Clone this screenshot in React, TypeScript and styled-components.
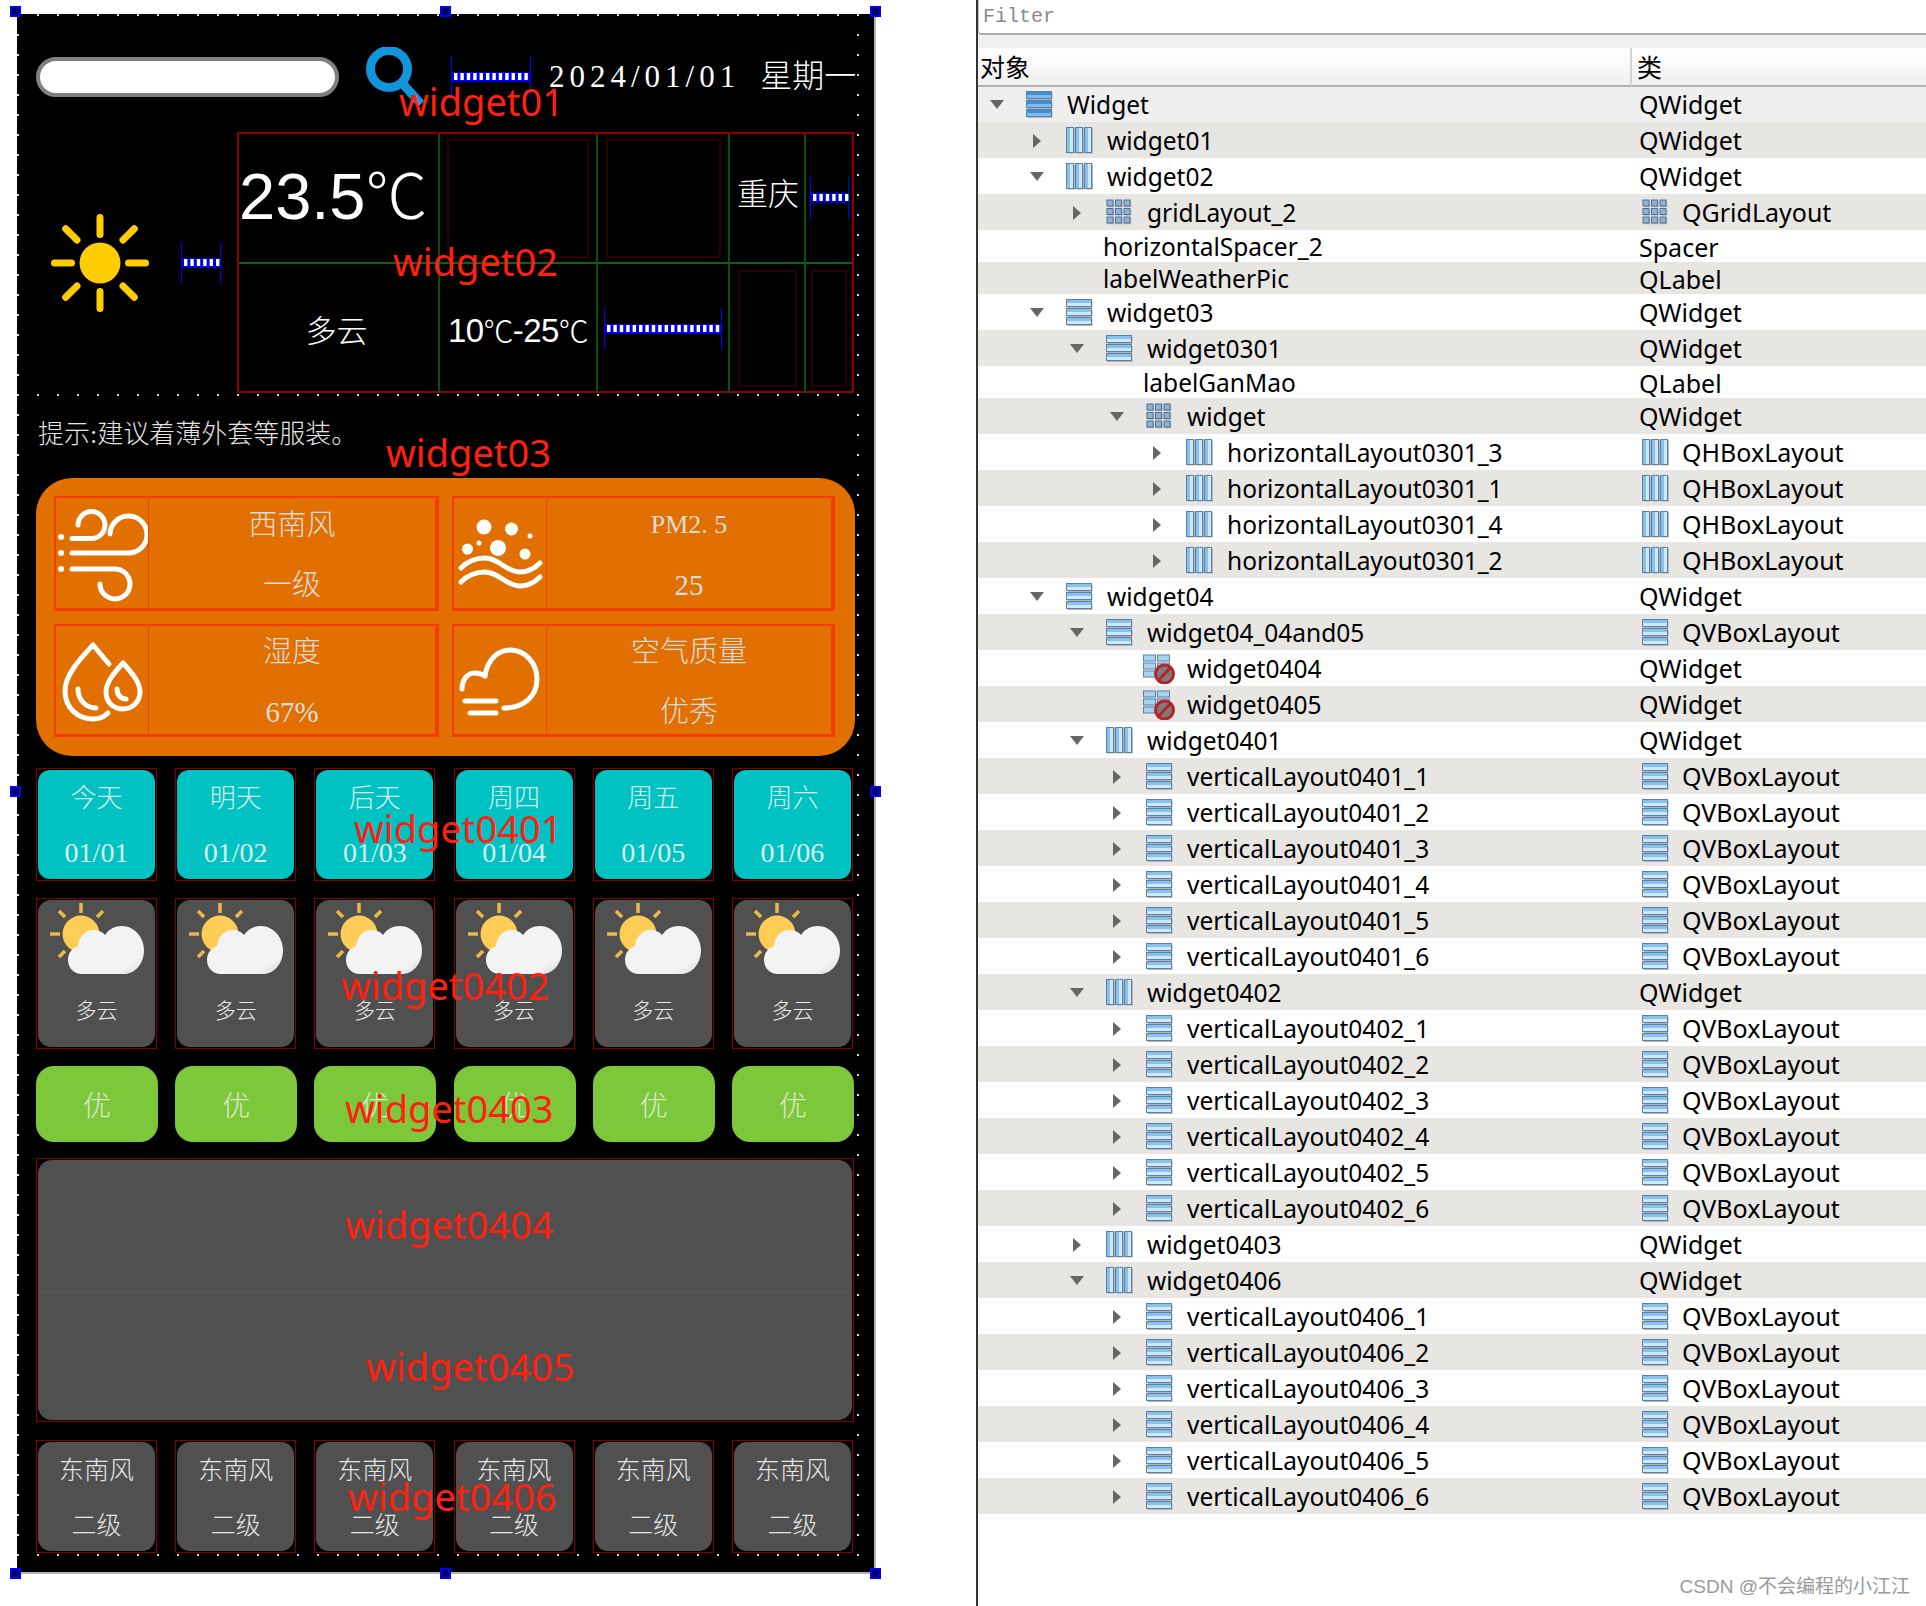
import React from "react";
import styled, { createGlobalStyle } from "styled-components";

const GlobalStyle = createGlobalStyle`
  html, body {
    margin: 0;
    background: #fff;
  }
  * {
    box-sizing: border-box;
  }
`;

const SERIF = `"Liberation Serif", "Noto Sans CJK SC", serif`;
const SANS = `"Noto Sans", "Noto Sans CJK SC", sans-serif`;

const days = [
  ["今天", "01/01"],
  ["明天", "01/02"],
  ["后天", "01/03"],
  ["周四", "01/04"],
  ["周五", "01/05"],
  ["周六", "01/06"],
];

type IconKind = "v" | "vDark" | "h" | "grid" | "broken" | null;
type TreeItem = {
  level: number;
  name: string;
  cls: string;
  icon: IconKind;
  arrow?: "d" | "r";
  clsIcon?: IconKind;
};

const layouts = (id: string): TreeItem[] =>
  [1, 2, 3, 4, 5, 6].map((n) => ({
    level: 3,
    name: `verticalLayout${id}_${n}`,
    cls: "QVBoxLayout",
    icon: "v",
    arrow: "r",
    clsIcon: "v",
  }));

const tree: TreeItem[] = [
  { level: 0, name: "Widget", cls: "QWidget", icon: "vDark", arrow: "d" },
  { level: 1, name: "widget01", cls: "QWidget", icon: "h", arrow: "r" },
  { level: 1, name: "widget02", cls: "QWidget", icon: "h", arrow: "d" },
  { level: 2, name: "gridLayout_2", cls: "QGridLayout", icon: "grid", arrow: "r", clsIcon: "grid" },
  { level: 2, name: "horizontalSpacer_2", cls: "Spacer", icon: null },
  { level: 2, name: "labelWeatherPic", cls: "QLabel", icon: null },
  { level: 1, name: "widget03", cls: "QWidget", icon: "v", arrow: "d" },
  { level: 2, name: "widget0301", cls: "QWidget", icon: "v", arrow: "d" },
  { level: 3, name: "labelGanMao", cls: "QLabel", icon: null },
  { level: 3, name: "widget", cls: "QWidget", icon: "grid", arrow: "d" },
  ...["3", "1", "4", "2"].map(
    (n): TreeItem => ({
      level: 4,
      name: `horizontalLayout0301_${n}`,
      cls: "QHBoxLayout",
      icon: "h",
      arrow: "r",
      clsIcon: "h",
    })
  ),
  { level: 1, name: "widget04", cls: "QWidget", icon: "v", arrow: "d" },
  { level: 2, name: "widget04_04and05", cls: "QVBoxLayout", icon: "v", arrow: "d", clsIcon: "v" },
  { level: 3, name: "widget0404", cls: "QWidget", icon: "broken" },
  { level: 3, name: "widget0405", cls: "QWidget", icon: "broken" },
  { level: 2, name: "widget0401", cls: "QWidget", icon: "h", arrow: "d" },
  ...layouts("0401"),
  { level: 2, name: "widget0402", cls: "QWidget", icon: "h", arrow: "d" },
  ...layouts("0402"),
  { level: 2, name: "widget0403", cls: "QWidget", icon: "h", arrow: "r" },
  { level: 2, name: "widget0406", cls: "QWidget", icon: "h", arrow: "d" },
  ...layouts("0406"),
];

const Spring = ({ width, height }: { width: number; height: number }) => {
  const mid = height / 2;
  const bars = [];
  for (let x = 3; x < width - 3; x += 6.4) bars.push(x);
  return (
    <svg width={width} height={height} style={{ display: "block", flex: "none" }}>
      <path d={`M0.5 0V${height}M${width - 0.5} 0V${height}`} stroke="#0000ff" strokeWidth="1" />
      <rect x="0" y={mid - 5} width={width} height="10" fill="#0000e0" />
      {bars.map((x) => (
        <rect key={x} x={x} y={mid - 4} width="3.4" height="7" fill="#fff" />
      ))}
    </svg>
  );
};

const SearchIcon = () => (
  <svg width="60" height="60" viewBox="0 0 60 60" style={{ display: "block", flex: "none" }}>
    <circle cx="23" cy="22" r="18.5" fill="none" stroke="#1296db" strokeWidth="9" />
    <path d="M36 36L55 57" stroke="#1296db" strokeWidth="9" />
  </svg>
);

const BigSun = () => (
  <svg width="128" height="110" viewBox="-64 -55 128 110" style={{ display: "block", flex: "none" }}>
    <circle r="20.5" fill="#ffcc00" />
    {[0, 90, 180, 270].map((a) => (
      <rect key={a} x="-3.5" y="-49" width="7" height="24" rx="3.5" fill="#ffcc00" transform={`rotate(${a})`} />
    ))}
    {[45, 135, 225, 315].map((a) => (
      <rect key={a} x="-3.5" y="-52" width="7" height="23" rx="3.5" fill="#ffcc00" transform={`rotate(${a})`} />
    ))}
  </svg>
);

const CloudSun = () => (
  <svg width="117" height="80" viewBox="0 0 117 80" style={{ display: "block" }}>
    <defs>
      <linearGradient id="cloudFill" x1="0.2" y1="0.2" x2="1" y2="1">
        <stop offset="0.75" stopColor="#f3f3f3" />
        <stop offset="1" stopColor="#d6d6d6" />
      </linearGradient>
    </defs>
    <circle cx="43" cy="34" r="18.5" fill="#ffcc55" />
    <g stroke="#eab94e" strokeWidth="3.5">
      <path d="M43 3V13" />
      <path d="M12 34H22" />
      <path d="M21 11L27 17" />
      <path d="M65 11L59 17" />
      <path d="M21 57L27 51" />
    </g>
    <path
      d="M44 74C36 74 30 68 30 60C30 53 34 48 40 46C41 36 48 30 55 30C60 30 65 32 67 35C71 29 77 26 84 26C96 26 106 37 106 50C106 64 97 74 86 74Z"
      fill="url(#cloudFill)"
    />
  </svg>
);

const GlyphSvg = styled.svg`
  display: block;
  width: 92px;
  height: 110px;
  flex: none;
  fill: none;
  stroke: #fff;
  stroke-width: 5;
  stroke-linecap: round;
  stroke-linejoin: round;
`;

const WindGlyph = () => (
  <GlyphSvg viewBox="0 0 92 110">
    <path d="M22 27A13.5 13.5 0 1 1 35.5 40.5H16" />
    <path d="M54 36A18.5 18.5 0 1 1 72 55H16" />
    <path d="M16 71H59A15 15 0 1 1 44 86" />
    <g fill="#fff" stroke="none">
      <circle cx="5" cy="39" r="3" />
      <circle cx="5" cy="55" r="3" />
      <circle cx="5" cy="71" r="3" />
    </g>
  </GlyphSvg>
);

const DustGlyph = () => (
  <GlyphSvg viewBox="0 0 92 110">
    <g fill="#fff" stroke="none">
      <circle cx="30" cy="29" r="7.5" />
      <circle cx="57.5" cy="31" r="6.5" />
      <circle cx="76" cy="38" r="2.5" />
      <circle cx="25" cy="45" r="2.5" />
      <circle cx="13.5" cy="51" r="5.5" />
      <circle cx="44" cy="50" r="8" />
      <circle cx="71" cy="56" r="5.5" />
    </g>
    <path d="M7 70C15 62 24 60 31 60C45 60 52 74 66 74C74 74 80 71 86 65" />
    <path d="M7 84C15 76 24 74 31 74C45 74 52 88 66 88C74 88 80 85 86 79" />
  </GlyphSvg>
);

const DropGlyph = () => (
  <GlyphSvg viewBox="0 0 92 110">
    <path d="M53 39L37 20C24 34 9 50 9 66C9 83 22 94 37 94C43 94 48 92 52 88" />
    <path d="M22 64C22 75 30 83 40 83" />
    <path d="M67 38C58 48 50 57 50 67C50 77 57 84 67 84C76 84 84 77 84 67C84 57 76 48 67 38Z" />
    <path d="M61 64C61 70 65 74 70 74" />
  </GlyphSvg>
);

const CloudGlyph = () => (
  <GlyphSvg viewBox="0 0 92 110">
    <path d="M31 51C33 35 44 25 56 25C71 25 83 38 83 54C83 71 70 83 50 83" />
    <path d="M8 64C8 54 14 48 21 48C25 48 28 49 31 51" />
    <path d="M11 76H42M16 88H42" />
  </GlyphSvg>
);

const TreeIcon = ({ kind }: { kind: IconKind }) => {
  const dark = kind === "vDark";
  const line = "#5f7fa3";
  const top = dark ? "#3f8fd8" : "#86c2ee";
  const low = dark ? "#7cbcf0" : "#cfe8fb";
  if (kind === "v" || kind === "vDark") {
    return (
      <IconSvg viewBox="0 0 27 27">
        {[1, 10, 19].map((y) => (
          <g key={y}>
            <rect x="1.5" y={y + 1} width="25" height="7" fill="#b4b4b4" />
            <rect x="0.5" y={y - 0.5} width="25" height="7" fill={low} stroke={line} />
            <rect x="1" y={y} width="24" height="3" fill={top} />
          </g>
        ))}
      </IconSvg>
    );
  }
  if (kind === "h") {
    return (
      <IconSvg viewBox="0 0 27 27">
        {[1, 10, 19].map((x) => (
          <g key={x}>
            <rect x={x + 1} y="1.5" width="7" height="25" fill="#b4b4b4" />
            <rect x={x - 0.5} y="0.5" width="7" height="25" fill={low} stroke={line} />
            <rect x={x} y="1" width="3" height="24" fill={top} />
          </g>
        ))}
      </IconSvg>
    );
  }
  if (kind === "grid") {
    return (
      <IconSvg viewBox="0 0 27 27">
        {[1, 9.5, 18].map((y) =>
          [1, 9.5, 18].map((x) => (
            <g key={`${x}-${y}`}>
              <rect x={x + 0.8} y={y + 0.8} width="6.5" height="6.5" fill="#bdbdbd" />
              <rect x={x} y={y} width="6" height="6" fill="#8fb2d6" stroke="#4e6d92" strokeWidth="1" />
            </g>
          ))
        )}
      </IconSvg>
    );
  }
  if (kind === "broken") {
    return (
      <BrokenSvg viewBox="0 0 32 30">
        {[1, 9, 17].map((y) => (
          <g key={y}>
            <rect x="0.5" y={y} width="12" height="6" fill="#a8d4f4" stroke={line} />
            <rect x="14.5" y={y} width="12" height="6" fill="#a8d4f4" stroke={line} />
          </g>
        ))}
        <circle cx="21.5" cy="20" r="9" fill="#7c7c7c" stroke="#b8222a" strokeWidth="3" />
        <path d="M15 27L28 13" stroke="#b8222a" strokeWidth="3" />
      </BrokenSvg>
    );
  }
  return null;
};

const TreeArrow = ({ dir }: { dir: "d" | "r" }) => (
  <svg width="14" height="14" viewBox="0 0 14 14" style={{ display: "block" }}>
    {dir === "d" ? <path d="M0 2H14L7 11Z" fill="#666" /> : <path d="M3 0L11 7L3 14Z" fill="#666" />}
  </svg>
);

const labels: [string, number, number][] = [
  ["widget01", 399, 101],
  ["widget02", 393, 261],
  ["widget03", 386, 452],
  ["widget0401", 354, 828],
  ["widget0402", 341, 985],
  ["widget0403", 345, 1108],
  ["widget0404", 345, 1224],
  ["widget0405", 366, 1366],
  ["widget0406", 348, 1496],
];

const handles: [number, number][] = [
  [10, 6],
  [440, 6],
  [870, 6],
  [10, 786],
  [870, 786],
  [10, 1568],
  [440, 1568],
  [870, 1568],
];

const App = () => {
  return (
    <Page>
      <GlobalStyle />
      <DesignerArea>
        <Form>
          <TopBar>
            <SearchBox />
            <SearchSlot>
              <SearchIcon />
            </SearchSlot>
            <Spring width={80} height={42} />
            <DateText>
              2024/01/01<WeekDay>星期一</WeekDay>
            </DateText>
          </TopBar>

          <NowRow>
            <BigSun />
            <SpringSlot>
              <Spring width={40} height={42} />
            </SpringSlot>
            <NowGrid>
              <NowCell $right $bottom $align="flex-start">
                <Temp>
                  23.5<TempUnit>℃</TempUnit>
                </Temp>
              </NowCell>
              <NowCell $right $bottom>
                <DimBox $w={142} $h={119} />
              </NowCell>
              <NowCell $right $bottom>
                <DimBox $w={115} $h={119} />
              </NowCell>
              <NowCell $right $bottom>
                <City $lift={14} $shift={2}>重庆</City>
              </NowCell>
              <NowCell $bottom>
                <Spring width={39} height={42} />
              </NowCell>
              <NowCell $right>
                <City $lift={0} $shift={-4}>多云</City>
              </NowCell>
              <NowCell $right>
                <Range>
                  10<RangeUnit>℃</RangeUnit>-25<RangeUnit>℃</RangeUnit>
                </Range>
              </NowCell>
              <NowCell $right>
                <Spring width={118} height={42} />
              </NowCell>
              <NowCell $right>
                <DimBox $w={59} $h={117} />
              </NowCell>
              <NowCell>
                <DimBox $w={36} $h={117} />
              </NowCell>
            </NowGrid>
          </NowRow>

          <Hint>提示:建议着薄外套等服装。</Hint>

          <OrangePanel>
            <StatBox>
              <WindGlyph />
              <StatText>
                <span>西南风</span>
                <span>一级</span>
              </StatText>
            </StatBox>
            <StatBox>
              <DustGlyph />
              <StatText>
                <LatinLine>PM2. 5</LatinLine>
                <span>25</span>
              </StatText>
            </StatBox>
            <StatBox>
              <DropGlyph />
              <StatText>
                <span>湿度</span>
                <span>67%</span>
              </StatText>
            </StatBox>
            <StatBox>
              <CloudGlyph />
              <StatText>
                <span>空气质量</span>
                <span>优秀</span>
              </StatText>
            </StatBox>
          </OrangePanel>

          <SixRow $top={12} $height={113}>
            {days.map(([day, date]) => (
              <FrameCell key={date}>
                <DayCard>
                  <span>{day}</span>
                  <span>{date}</span>
                </DayCard>
              </FrameCell>
            ))}
          </SixRow>

          <SixRow $top={17} $height={151}>
            {days.map(([, date]) => (
              <FrameCell key={date}>
                <ForecastCard>
                  <CloudSun />
                  <ForecastText>多云</ForecastText>
                </ForecastCard>
              </FrameCell>
            ))}
          </SixRow>

          <SixRow $top={17} $height={76}>
            {days.map(([, date]) => (
              <QualityCard key={date}>优</QualityCard>
            ))}
          </SixRow>

          <ChartFrame>
            <ChartPanel />
          </ChartFrame>

          <SixRow $top={18} $height={113}>
            {days.map(([, date]) => (
              <FrameCell key={date}>
                <WindCard>
                  <span>东南风</span>
                  <span>二级</span>
                </WindCard>
              </FrameCell>
            ))}
          </SixRow>

          <DotLine $dir="v" $pos={840} />
          <DotLine $dir="v" $pos={0} />
          <DotLine $dir="h" $pos={0} />
          <DotLine $dir="h" $pos={380} />
          <DotLine $dir="h" $pos={1540} />

          {labels.map(([text, x, y]) => (
            <DesignLabel key={text} $x={x - 17} $y={y - 14}>
              {text}
            </DesignLabel>
          ))}
        </Form>
        {handles.map(([x, y]) => (
          <Handle key={`${x}-${y}`} $x={x} $y={y} />
        ))}
      </DesignerArea>

      <Inspector>
        <FilterField>Filter</FilterField>
        <HeaderRow>
          <HeaderCell>对象</HeaderCell>
          <HeaderCell $last>类</HeaderCell>
        </HeaderRow>
        {tree.map((item, i) => (
          <TreeRow key={item.name} $index={i} $short={!item.icon}>
            <NameCell $level={item.level} $bare={!item.icon}>
              {item.icon && (
                <ArrowSlot>{item.arrow && <TreeArrow dir={item.arrow} />}</ArrowSlot>
              )}
              {item.icon && (
                <IconSlot>
                  <TreeIcon kind={item.icon} />
                </IconSlot>
              )}
              {item.name}
            </NameCell>
            <ClassCell>
              {item.clsIcon && (
                <ClassIcon>
                  <TreeIcon kind={item.clsIcon} />
                </ClassIcon>
              )}
              {item.cls}
            </ClassCell>
          </TreeRow>
        ))}
        <Watermark>CSDN @不会编程的小江江</Watermark>
      </Inspector>
    </Page>
  );
};

export default App;

const Page = styled.div`
  position: relative;
  display: flex;
  width: 1926px;
  height: 1606px;
  overflow: hidden;
  background: #fff;
`;

const DesignerArea = styled.div`
  width: 976px;
  flex: none;
  padding: 14px 0 0 17px;
`;

const Form = styled.div`
  position: relative;
  width: 859px;
  height: 1560px;
  padding: 33px 19px 0;
  background: #000;
  border-right: 2px solid #b4b4b4;
  border-bottom: 2px solid #b4b4b4;
`;

const TopBar = styled.div`
  display: flex;
  align-items: center;
  height: 60px;
`;

const SearchBox = styled.div`
  width: 303px;
  height: 40px;
  flex: none;
  background: #fff;
  border: 4px solid #808080;
  border-radius: 20px;
`;

const SearchSlot = styled.div`
  margin: 0 25px 0 27px;
`;

const DateText = styled.div`
  margin: 0 0 8px 18px;
  color: #fff;
  font: 31px ${SERIF};
  letter-spacing: 5px;
  white-space: nowrap;
`;

const WeekDay = styled.span`
  margin-left: 20px;
  font-size: 32px;
  font-weight: 300;
  letter-spacing: 0;
`;

const NowRow = styled.div`
  display: flex;
  align-items: center;
  margin-top: 25px;
`;

const SpringSlot = styled.div`
  margin: 0 16px 0 17px;
`;

const NowGrid = styled.div`
  display: grid;
  grid-template-columns: 201px 158px 132px 76px 46px;
  grid-template-rows: 130px 129px;
  width: 617px;
  height: 261px;
  border: 2px solid #8b0000;
`;

const NowCell = styled.div<{ $right?: boolean; $bottom?: boolean; $align?: string }>`
  display: flex;
  align-items: center;
  justify-content: ${(p) => p.$align || "center"};
  min-width: 0;
  color: #fff;
  border-right: ${(p) => (p.$right ? "2px solid #0a4f0a" : "none")};
  border-bottom: ${(p) => (p.$bottom ? "2px solid #0a6410" : "none")};
`;

const DimBox = styled.div<{ $w: number; $h: number }>`
  width: ${(p) => p.$w}px;
  height: ${(p) => p.$h}px;
  border: 2px solid #2b0000;
`;

const Temp = styled.div`
  margin-bottom: 12px;
  font: 65px "Liberation Sans", sans-serif;
  line-height: 1;
  white-space: nowrap;
`;

const TempUnit = styled.span`
  font: 300 62px "Noto Sans CJK SC", sans-serif;
`;

const City = styled.div<{ $lift: number; $shift?: number }>`
  margin-bottom: ${(p) => p.$lift}px;
  margin-left: ${(p) => p.$shift || 0}px;
  font: 300 31px "Noto Sans CJK SC", sans-serif;
  line-height: 1;
`;

const Range = styled.div`
  font: 33px "Liberation Sans", sans-serif;
  letter-spacing: -0.6px;
  white-space: nowrap;
`;

const RangeUnit = styled.span`
  font: 300 30px "Noto Sans CJK SC", sans-serif;
`;

const Hint = styled.div`
  margin: 30px 0 0 2px;
  color: #e4e4e4;
  font: 300 26px/24px ${SERIF};
  white-space: nowrap;
`;

const OrangePanel = styled.div`
  display: grid;
  grid-template-columns: 385px 383px;
  grid-template-rows: 115px 113px;
  gap: 13px;
  height: 278px;
  margin-top: 31px;
  padding: 18px 0 0 18px;
  background: #e17000;
  border-radius: 36px;
`;

const StatBox = styled.div`
  display: flex;
  align-items: center;
  border: 2px solid #f53c00;
  border-bottom-width: 3px;
`;

const StatText = styled.div`
  display: flex;
  flex: 1;
  flex-direction: column;
  align-items: center;
  justify-content: center;
  gap: 30px;
  align-self: stretch;
  margin-top: 1px;
  padding-top: 3px;
  color: #dcdcdc;
  font: 300 29px/30px ${SERIF};
  border-left: 1px solid #f53c00;
  border-right: 2px solid #f53c00;
`;

const LatinLine = styled.span`
  font-size: 26px;
`;

const SixRow = styled.div<{ $top: number; $height: number }>`
  display: grid;
  grid-template-columns: repeat(6, 121px);
  column-gap: 18.2px;
  height: ${(p) => p.$height}px;
  margin-top: ${(p) => p.$top}px;
`;

const FrameCell = styled.div`
  display: flex;
  padding: 1px;
  border: 1px solid #800000;
`;

const DayCard = styled.div`
  display: flex;
  flex: 1;
  flex-direction: column;
  align-items: center;
  justify-content: space-between;
  padding: 12px 0 9px;
  color: #d8eeee;
  font: 300 26px/34px ${SERIF};
  background: #00c2c2;
  border-radius: 12px;

  span:last-child {
    font-size: 28px;
  }
`;

const ForecastCard = styled.div`
  display: flex;
  flex: 1;
  flex-direction: column;
  background: #505050;
  border-radius: 13px;
`;

const ForecastText = styled.div`
  margin-top: 16px;
  color: #e8e8e8;
  font: 300 21px/26px "Noto Sans CJK SC", sans-serif;
  text-align: center;
`;

const QualityCard = styled.div`
  display: flex;
  align-items: center;
  justify-content: center;
  width: 122px;
  color: #dde8d4;
  font: 300 28px "Noto Sans CJK SC", sans-serif;
  background: #7dc83a;
  border-radius: 18px;
`;

const ChartFrame = styled.div`
  display: flex;
  width: 818px;
  height: 264px;
  margin-top: 16px;
  padding: 1px;
  border: 1px solid #800000;
`;

const ChartPanel = styled.div`
  flex: 1;
  background: linear-gradient(
    #505050 0 132px,
    #5a5a5a 132px 133px,
    #505050 133px
  );
  border-radius: 14px;
`;

const WindCard = styled.div`
  display: flex;
  flex: 1;
  flex-direction: column;
  align-items: center;
  justify-content: space-between;
  padding: 9px 0 11px;
  color: #e4e4e4;
  font: 300 25px/34px "Noto Sans CJK SC", sans-serif;
  background: #505050;
  border-radius: 13px;
`;

const DotLine = styled.div<{ $dir: "h" | "v"; $pos: number }>`
  position: absolute;
  pointer-events: none;
  ${(p) =>
    p.$dir === "v"
      ? `left: ${p.$pos}px; top: 0; bottom: 0; width: 2px;
         background: repeating-linear-gradient(#d8d8d8 0 2px, transparent 2px 20px);`
      : `top: ${p.$pos}px; left: 0; right: 16px; height: 2px;
         background: repeating-linear-gradient(90deg, #d8d8d8 0 2px, transparent 2px 20px);`}
`;

const DesignLabel = styled.div<{ $x: number; $y: number }>`
  position: absolute;
  left: ${(p) => p.$x}px;
  top: ${(p) => p.$y}px;
  transform: translateY(-50%);
  color: #ff2010;
  font: 38px/1 "Noto Sans", sans-serif;
  white-space: nowrap;
`;

const Handle = styled.div<{ $x: number; $y: number }>`
  position: absolute;
  left: ${(p) => p.$x}px;
  top: ${(p) => p.$y}px;
  width: 11px;
  height: 11px;
  background: #000060;
  border: 2px solid #0000ff;
`;

const Inspector = styled.div`
  position: relative;
  flex: 1;
  min-width: 0;
  border-left: 2px solid #333;
  color: #000;
  font: 25px ${SANS};
`;

const FilterField = styled.div`
  height: 35px;
  padding: 2px 0 0 4px;
  color: #8a8a8a;
  font: 20px/30px "Liberation Mono", monospace;
  border-bottom: 2px solid #adadad;
  border-left: 1px solid #c4c4c4;
  border-bottom-left-radius: 3px;
`;

const HeaderRow = styled.div`
  display: grid;
  grid-template-columns: 654px 1fr;
  height: 51px;
  padding-top: 13px;
  background: #f0f0f0;
`;

const HeaderCell = styled.div<{ $last?: boolean }>`
  padding-left: ${(p) => (p.$last ? "5px" : "2px")};
  font: 25px/37px "Noto Sans CJK SC", sans-serif;
  background: linear-gradient(#fff, #f0f0f0);
  border-bottom: 2px solid #b0b0b0;
  border-right: ${(p) => (p.$last ? "none" : "2px solid #d4d4d4")};
`;

const TreeRow = styled.div<{ $index: number; $short: boolean }>`
  display: grid;
  grid-template-columns: 654px 1fr;
  align-items: center;
  height: ${(p) => (p.$short ? 32 : 36)}px;
  line-height: 32px;
  white-space: nowrap;
  background: ${(p) => (p.$index === 0 ? "#efefef" : p.$index % 2 ? "#e8e6e3" : "#fff")};
`;

const NameCell = styled.div<{ $level: number; $bare: boolean }>`
  display: flex;
  align-items: center;
  padding-top: 1px;
  padding-left: ${(p) => p.$level * 40 + (p.$bare ? 45 : 0)}px;
  font-size: 24.5px;
`;

const ArrowSlot = styled.div`
  width: 48px;
  padding-left: 12px;
  flex: none;
`;

const IconSlot = styled.div`
  width: 41px;
  flex: none;
`;

const IconSvg = styled.svg`
  display: block;
  width: 27px;
  height: 27px;
`;

const BrokenSvg = styled.svg`
  display: block;
  width: 32px;
  height: 30px;
  margin-left: -3px;
`;

const ClassCell = styled.div`
  display: flex;
  align-items: center;
  padding-left: 7px;
`;

const ClassIcon = styled.div`
  width: 43px;
  padding-left: 3px;
  flex: none;
`;

const Watermark = styled.div`
  position: absolute;
  right: 16px;
  bottom: 8px;
  color: #9a9a9a;
  font: 19px "Liberation Sans", "Noto Sans CJK SC", sans-serif;
  white-space: nowrap;
`;
